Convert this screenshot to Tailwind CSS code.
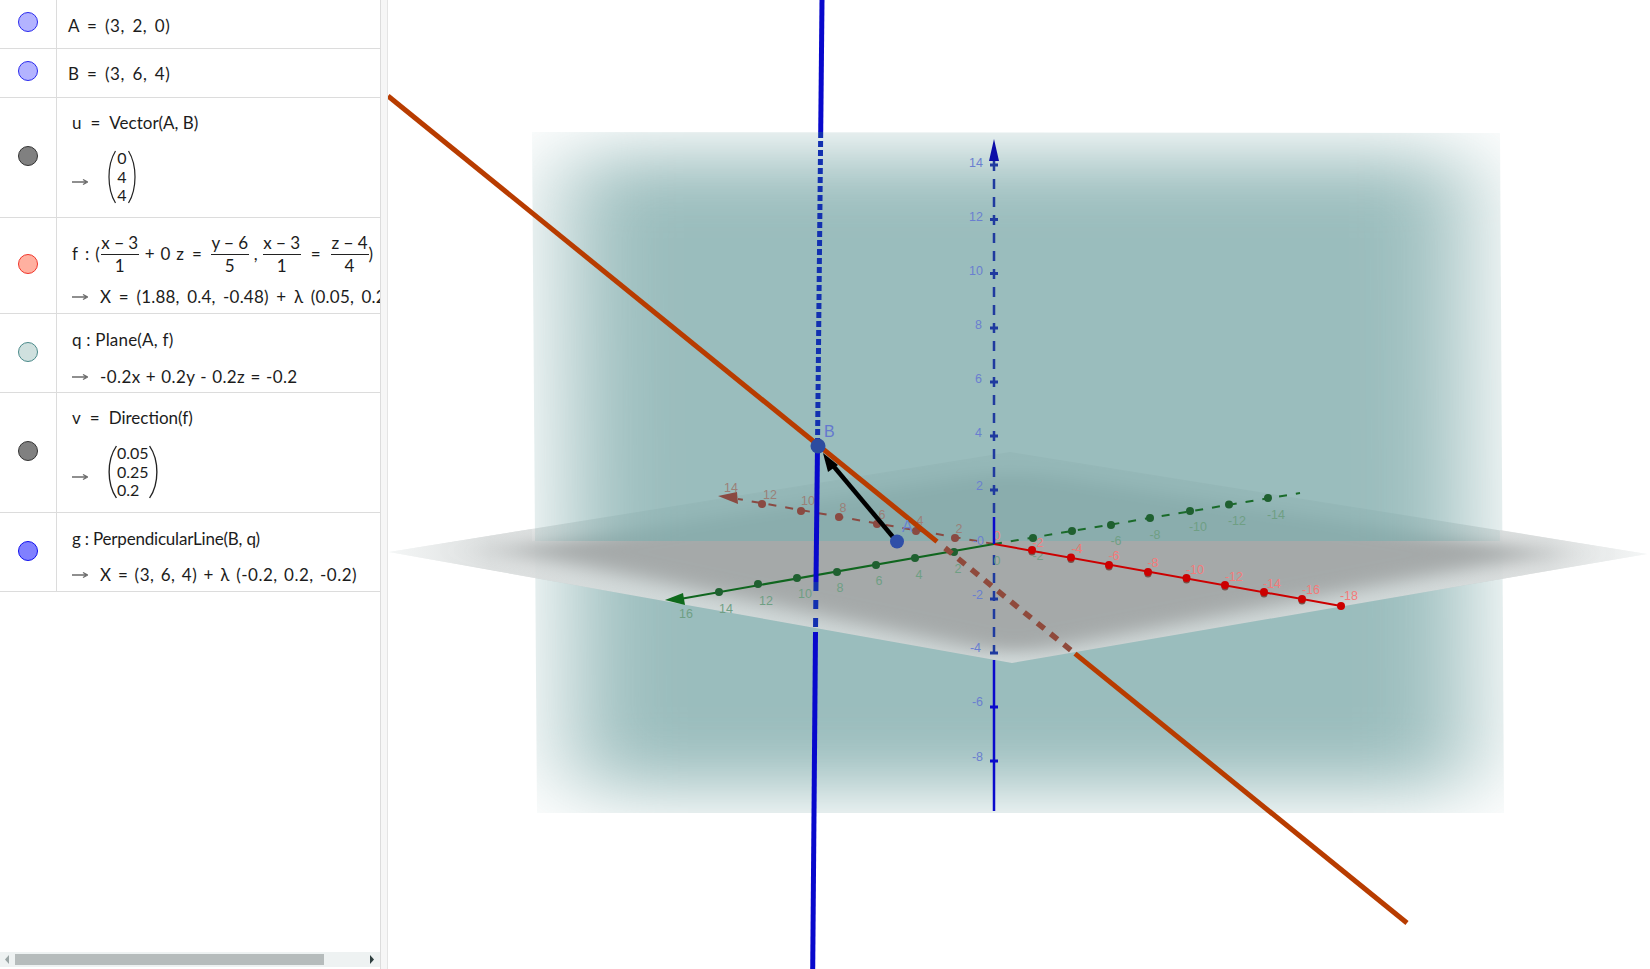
<!DOCTYPE html>
<html lang="en">
<head>
  <meta charset="UTF-8">
  <title>GeoGebra 3D</title>
  <script src="https://cdn.jsdelivr.net/npm/@tailwindcss/browser@4"></script>
</head>
<body class="bg-white overflow-hidden">
<div class="flex w-[1650px] h-[969px] font-['Lato','Open_Sans',sans-serif] text-[#1c1c1c]">

  <!-- algebra view -->
  <aside class="w-[381px] h-full flex flex-col border-r border-[#dcdcdc] overflow-hidden text-[17px]">
    <!-- A -->
    <div class="flex h-[49px] shrink-0 border-b border-[#dcdcdc]">
      <div class="w-[57px] shrink-0 border-r border-[#dcdcdc] flex items-center justify-center pb-[4px]">
        <div class="w-5 h-5 rounded-full bg-[#b3b3ff] border border-[#2a2aee]"></div>
      </div>
      <div class="pl-[11px] pt-[14px] leading-[24px] whitespace-nowrap tracking-[0.6px] [word-spacing:2.5px]">A = (3, 2, 0)</div>
    </div>
    <!-- B -->
    <div class="flex h-[49px] shrink-0 border-b border-[#dcdcdc]">
      <div class="w-[57px] shrink-0 border-r border-[#dcdcdc] flex items-center justify-center pb-[4px]">
        <div class="w-5 h-5 rounded-full bg-[#b3b3ff] border border-[#2a2aee]"></div>
      </div>
      <div class="pl-[11px] pt-[13px] leading-[24px] whitespace-nowrap tracking-[0.6px] [word-spacing:2.5px]">B = (3, 6, 4)</div>
    </div>
    <!-- u -->
    <div class="flex h-[120px] shrink-0 border-b border-[#dcdcdc]">
      <div class="w-[57px] shrink-0 border-r border-[#dcdcdc] flex items-center justify-center pb-[3px]">
        <div class="w-5 h-5 rounded-full bg-[#808080] border border-[#333333]"></div>
      </div>
      <div class="pl-[15px] pt-[13px] min-w-0 flex flex-col">
        <div class="leading-[24px] whitespace-nowrap"><span class="mr-[9px]">u</span><span class="mr-[9px]">=</span>Vector(A, B)</div>
        <div class="flex items-center mt-[13px] h-[58px]">
          <svg class="w-4 h-2 mr-[20px] mt-[10px]" viewBox="0 0 16 8"><path d="M0 4h14M11 1.5 15.5 4 11 6.5" fill="none" stroke="#6b6b6b" stroke-width="1.4"/></svg>
          <div class="flex items-stretch h-[54px]">
            <svg class="w-[8px] h-full" viewBox="0 0 8 54" preserveAspectRatio="none"><path d="M7.5 1C2 10 1 18 1 27s1 17 6.500 26" fill="none" stroke="#222" stroke-width="1.2"/></svg>
            <div class="flex flex-col items-center justify-center w-[12px] text-[16px] leading-[18.5px]"><span>0</span><span>4</span><span>4</span></div>
            <svg class="w-[8px] h-full" viewBox="0 0 8 54" preserveAspectRatio="none"><path d="M.5 1C6 10 7 18 7 27S6 44 .5 53" fill="none" stroke="#222" stroke-width="1.2"/></svg>
          </div>
        </div>
      </div>
    </div>
    <!-- f -->
    <div class="flex h-[96px] shrink-0 border-b border-[#dcdcdc]">
      <div class="w-[57px] shrink-0 border-r border-[#dcdcdc] flex items-center justify-center pb-[3px]">
        <div class="w-5 h-5 rounded-full bg-[#ffb0a0] border border-[#f0352a]"></div>
      </div>
      <div class="pl-[15px] pt-[14px] min-w-0 flex-1 flex flex-col overflow-hidden">
        <div class="flex items-center h-[44px] whitespace-nowrap">
          <span class="mr-[7px]">f</span><span class="mr-[6px]">:</span><span class="mr-[1px]">(</span>
          <div class="flex flex-col items-center w-[38px] shrink-0 text-[17px] leading-[22px]"><span class="w-full text-center border-b border-[#222]">x − 3</span><span>1</span></div>
          <span class="ml-[6px] mr-[8px] [word-spacing:1.5px]">+ 0 z</span><span class="mr-[9px]">=</span>
          <div class="flex flex-col items-center w-[38px] shrink-0 text-[17px] leading-[22px]"><span class="w-full text-center border-b border-[#222]">y − 6</span><span>5</span></div>
          <span class="mx-[5px]">,</span>
          <div class="flex flex-col items-center w-[38px] shrink-0 text-[17px] leading-[22px]"><span class="w-full text-center border-b border-[#222]">x − 3</span><span>1</span></div>
          <span class="mx-[10px]">=</span>
          <div class="flex flex-col items-center w-[38px] shrink-0 text-[17px] leading-[22px]"><span class="w-full text-center border-b border-[#222]">z − 4</span><span>4</span></div>
          <span>)</span>
        </div>
        <div class="flex items-center h-[24px] mt-[9px] whitespace-nowrap tracking-[0.2px] [word-spacing:3px]">
          <svg class="w-4 h-2 mr-[12px] shrink-0" viewBox="0 0 16 8"><path d="M0 4h14M11 1.5 15.5 4 11 6.5" fill="none" stroke="#6b6b6b" stroke-width="1.4"/></svg>
          <span>X = (1.88, 0.4, -0.48) + λ (0.05, 0.25, 0.2)</span>
        </div>
      </div>
    </div>
    <!-- q -->
    <div class="flex h-[79px] shrink-0 border-b border-[#dcdcdc]">
      <div class="w-[57px] shrink-0 border-r border-[#dcdcdc] flex items-center justify-center pb-[3px]">
        <div class="w-5 h-5 rounded-full bg-[#cfe0de] border border-[#4a8a8a]"></div>
      </div>
      <div class="pl-[15px] pt-[14px] min-w-0 flex flex-col">
        <div class="leading-[24px] whitespace-nowrap tracking-[0.2px]">q : Plane(A, f)</div>
        <div class="flex items-center h-[24px] mt-[13px] whitespace-nowrap tracking-[0.4px] [word-spacing:0.5px]">
          <svg class="w-4 h-2 mr-[12px] shrink-0" viewBox="0 0 16 8"><path d="M0 4h14M11 1.5 15.5 4 11 6.5" fill="none" stroke="#6b6b6b" stroke-width="1.4"/></svg>
          <span>-0.2x + 0.2y - 0.2z = -0.2</span>
        </div>
      </div>
    </div>
    <!-- v -->
    <div class="flex h-[120px] shrink-0 border-b border-[#dcdcdc]">
      <div class="w-[57px] shrink-0 border-r border-[#dcdcdc] flex items-center justify-center pb-[3px]">
        <div class="w-5 h-5 rounded-full bg-[#808080] border border-[#333333]"></div>
      </div>
      <div class="pl-[15px] pt-[13px] min-w-0 flex flex-col">
        <div class="leading-[24px] whitespace-nowrap"><span class="mr-[9px]">v</span><span class="mr-[9px]">=</span>Direction(f)</div>
        <div class="flex items-center mt-[13px] h-[58px]">
          <svg class="w-4 h-2 mr-[20px] mt-[10px]" viewBox="0 0 16 8"><path d="M0 4h14M11 1.5 15.5 4 11 6.5" fill="none" stroke="#6b6b6b" stroke-width="1.4"/></svg>
          <div class="flex items-stretch h-[54px]">
            <svg class="w-[9px] h-full" viewBox="0 0 8 54" preserveAspectRatio="none"><path d="M7.5 1C2 10 1 18 1 27s1 17 6.500 26" fill="none" stroke="#222" stroke-width="1.2"/></svg>
            <div class="flex flex-col items-start justify-center w-[32px] text-[16px] leading-[18.5px]"><span>0.05</span><span>0.25</span><span>0.2</span></div>
            <svg class="w-[9px] h-full" viewBox="0 0 8 54" preserveAspectRatio="none"><path d="M.5 1C6 10 7 18 7 27S6 44 .5 53" fill="none" stroke="#222" stroke-width="1.2"/></svg>
          </div>
        </div>
      </div>
    </div>
    <!-- g -->
    <div class="flex h-[79px] shrink-0 border-b border-[#dcdcdc]">
      <div class="w-[57px] shrink-0 border-r border-[#dcdcdc] flex items-center justify-center pb-[3px]">
        <div class="w-5 h-5 rounded-full bg-[#8080ff] border border-[#1010ee]"></div>
      </div>
      <div class="pl-[15px] pt-[14px] min-w-0 flex flex-col">
        <div class="leading-[24px] whitespace-nowrap tracking-[-0.2px]">g : PerpendicularLine(B, q)</div>
        <div class="flex items-center h-[24px] mt-[12px] whitespace-nowrap tracking-[0.5px] [word-spacing:1.5px]">
          <svg class="w-4 h-2 mr-[12px] shrink-0" viewBox="0 0 16 8"><path d="M0 4h14M11 1.5 15.5 4 11 6.5" fill="none" stroke="#6b6b6b" stroke-width="1.4"/></svg>
          <span>X = (3, 6, 4) + λ (-0.2, 0.2, -0.2)</span>
        </div>
      </div>
    </div>

    <div class="flex-1"></div>

    <!-- horizontal scrollbar -->
    <div class="h-[15px] mb-[2px] shrink-0 bg-[#eef2f2] flex items-center">
      <svg class="w-[15px] h-[11px] shrink-0" viewBox="0 0 15 11"><path d="M9 1v9L5 5.500z" fill="#9aa5a5"/></svg>
      <div class="w-[309px] h-[11px] bg-[#b6bcbc]"></div>
      <div class="flex-1"></div>
      <svg class="w-[9px] h-[11px] shrink-0 mr-[2px]" viewBox="0 0 9 11"><path d="M1 1v9l4-4.500z" fill="#2f3f3f"/></svg>
    </div>
  </aside>

  <!-- splitter -->
  <div class="w-[7px] h-full shrink-0 bg-[#f6f6f6] border-r border-[#e4e4e4]"></div>

  <!-- 3D graphics view -->
  <main class="flex-1 h-full relative overflow-hidden bg-white">
    <svg class="absolute inset-0 w-[1262px] h-[969px]" viewBox="388 0 1262 969" font-family="Liberation Sans, sans-serif" font-size="12.500">
      <defs>
        <clipPath id="planeClip"><polygon points="532,132 1500,133 1504,813 537,813"/></clipPath>
        <clipPath id="groundClip"><polygon points="389,552 1010,452 1647,554 1012,663"/></clipPath>
        <clipPath id="frontClip"><polygon points="389,552 532,529 532,541 1500,541 1500,530 1647,554 1012,663"/></clipPath>
        <linearGradient id="tipFade" gradientUnits="userSpaceOnUse" x1="389" y1="0" x2="1647" y2="0">
          <stop offset="0" stop-color="#f4f6f6"/><stop offset="0.08" stop-color="#dcdfdf"/><stop offset="0.92" stop-color="#dcdfdf"/><stop offset="1" stop-color="#f4f6f6"/>
        </linearGradient>
        <filter id="planeBlur" filterUnits="userSpaceOnUse" x="388" y="0" width="1262" height="969"><feGaussianBlur stdDeviation="50 35"/></filter>
        <filter id="groundBlur" filterUnits="userSpaceOnUse" x="388" y="300" width="1262" height="500"><feGaussianBlur stdDeviation="35 7"/></filter>
      </defs>

      <!-- xOy plane, behind -->
      <polygon points="389,552 1010,452 1647,554 1012,663" fill="url(#tipFade)" fill-opacity="0.85"/>
      <g clip-path="url(#groundClip)"><polygon points="510,550 1010,470 1545,553 1012,656" fill="#a2a6a6" fill-opacity="0.95" filter="url(#groundBlur)"/></g>
      <!-- plane q -->
      <g clip-path="url(#planeClip)"><polygon points="565,155 1467,155 1471,790 570,790" fill="#83aeae" fill-opacity="0.81" filter="url(#planeBlur)"/></g>
      <!-- xOy plane, in front -->
      <polygon points="389,552 532,529 532,541 1500,541 1500,530 1647,554 1012,663" fill="url(#tipFade)" fill-opacity="0.85"/>
      <g clip-path="url(#frontClip)"><polygon points="510,550 1010,470 1545,553 1012,656" fill="#a2a6a6" fill-opacity="0.95" filter="url(#groundBlur)"/></g>

      <!-- x axis, positive side -->
      <line x1="994" y1="544" x2="738" y2="499" stroke="#8a4a42" stroke-width="2" stroke-dasharray="8 9"/>
      <polygon points="718,496 737,492 738,504" fill="#8a4a42"/>
      <g fill="#8a4a42">
        <circle cx="762" cy="504" r="4"/><circle cx="801" cy="511" r="4"/><circle cx="839" cy="517" r="4"/><circle cx="877" cy="524" r="4"/><circle cx="916" cy="531" r="4"/><circle cx="955" cy="538" r="4"/>
      </g>
      <g fill="#9a8078" text-anchor="middle">
        <text x="731" y="492">14</text><text x="770" y="499">12</text><text x="808" y="505">10</text><text x="843" y="512">8</text><text x="882" y="519">6</text><text x="920" y="525">4</text><text x="959" y="533">2</text>
      </g>

      <!-- y axis, negative side -->
      <line x1="994" y1="544" x2="1300" y2="493" stroke="#1a6b2a" stroke-width="2" stroke-dasharray="8 9"/>
      <g fill="#1f6030">
        <circle cx="1033" cy="538" r="4"/><circle cx="1072" cy="531" r="4"/><circle cx="1111" cy="525" r="4"/><circle cx="1150" cy="518" r="4"/><circle cx="1190" cy="511" r="4"/><circle cx="1229" cy="504.500" r="4"/><circle cx="1268" cy="498" r="4"/>
      </g>
      <g fill="#6f9f84" text-anchor="middle">
        <text x="1038" y="560">-2</text><text x="1077" y="553">-4</text><text x="1116" y="545">-6</text><text x="1155" y="539">-8</text><text x="1198" y="531">-10</text><text x="1237" y="525">-12</text><text x="1276" y="519">-14</text>
      </g>

      <!-- y axis, positive side -->
      <line x1="994" y1="544" x2="680" y2="599" stroke="#10661f" stroke-width="2"/>
      <polygon points="665,600 683,593 685,605" fill="#0e6a1c"/>
      <g fill="#1f6030">
        <circle cx="954" cy="552" r="4"/><circle cx="915" cy="558" r="4"/><circle cx="876" cy="565" r="4"/><circle cx="837" cy="572" r="4"/><circle cx="797" cy="578" r="4"/><circle cx="758" cy="584" r="4"/><circle cx="719" cy="592" r="4"/>
      </g>
      <g fill="#6f9f84" text-anchor="middle">
        <text x="958" y="573">2</text><text x="919" y="579">4</text><text x="879" y="585">6</text><text x="840" y="592">8</text><text x="805" y="598">10</text><text x="766" y="605">12</text><text x="726" y="613">14</text><text x="686" y="618">16</text>
      </g>

      <!-- x axis, negative side -->
      <line x1="994" y1="544" x2="1341" y2="606" stroke="#cc0000" stroke-width="2"/>
      <g fill="#7a5048">
        <circle cx="1032" cy="552" r="3.500"/><circle cx="1071" cy="559.500" r="3.500"/><circle cx="1109" cy="567" r="3.500"/><circle cx="1148" cy="574" r="3.500"/><circle cx="1186.500" cy="580" r="3.500"/><circle cx="1225" cy="587" r="3.500"/><circle cx="1264" cy="594" r="3.500"/><circle cx="1302" cy="601" r="3.500"/>
      </g>
      <g fill="#cc0000">
        <circle cx="1032" cy="550" r="4"/><circle cx="1071" cy="557.500" r="4"/><circle cx="1109" cy="565" r="4"/><circle cx="1148" cy="572" r="4"/><circle cx="1186.500" cy="578" r="4"/><circle cx="1225" cy="585" r="4"/><circle cx="1264" cy="592" r="4"/><circle cx="1302" cy="599" r="4"/><circle cx="1341" cy="606" r="4"/>
      </g>
      <g fill="#f47a7a" text-anchor="middle">
        <text x="1038" y="547">-2</text><text x="1077" y="553">-4</text><text x="1114" y="560">-6</text><text x="1153" y="567">-8</text><text x="1195" y="574">-10</text><text x="1234" y="581">-12</text><text x="1272" y="588">-14</text><text x="1311" y="594">-16</text><text x="1349" y="600">-18</text>
        <text x="997" y="540">0</text>
      </g>

      <!-- z axis -->
      <line x1="994" y1="161" x2="994" y2="517" stroke="#1f3a9f" stroke-width="2.500" stroke-dasharray="10 8"/>
      <line x1="994" y1="517" x2="994" y2="544" stroke="#0a0acc" stroke-width="2.500"/>
      <line x1="994" y1="555" x2="994" y2="653" stroke="#1f3a9f" stroke-width="2.500" stroke-dasharray="10 8"/>
      <line x1="994" y1="660" x2="994" y2="811" stroke="#0a0acc" stroke-width="2.500"/>
      <polygon points="994,139 999,161 989,161" fill="#0c0ca8"/>
      <path d="M990 165h8M990 219.500h8M990 273.500h8M990 328h8M990 382h8M990 436h8M990 490h8M990 599h8M990 653h8" stroke="#1f3a9f" stroke-width="3"/>
      <path d="M990 707h8M990 761h8" stroke="#0a0acc" stroke-width="3"/>
      <g fill="#6a7fd0" text-anchor="end">
        <text x="983" y="167">14</text><text x="983" y="221">12</text><text x="983" y="275">10</text><text x="982" y="329">8</text><text x="982" y="383">6</text><text x="982" y="437">4</text><text x="983" y="490">2</text><text x="983" y="599">-2</text><text x="981" y="652">-4</text><text x="983" y="706">-6</text><text x="983" y="761">-8</text><text x="984" y="545">-0</text>
      </g>
      <text x="997" y="565" fill="#6f9f84" text-anchor="middle">0</text>

      <!-- line g -->
      <g stroke="#0808cc" stroke-width="5" fill="none">
        <line x1="822" y1="0" x2="820.700" y2="132"/>
        <line x1="820.700" y1="132" x2="817.500" y2="446" stroke="#1230b0" stroke-dasharray="6 3"/>
        <line x1="817.500" y1="446" x2="816" y2="582"/>
        <line x1="816" y1="582" x2="815.500" y2="632" stroke="#1230b0" stroke-dasharray="9 9"/>
        <line x1="815.500" y1="632" x2="812.700" y2="969"/>
      </g>

      <!-- line f -->
      <line x1="388" y1="96" x2="937" y2="541.600" stroke="#b83c00" stroke-width="5"/>
      <line x1="945" y1="548" x2="1075" y2="653.600" stroke="#8f4a3c" stroke-width="5.500" stroke-dasharray="9 8"/>
      <line x1="1075" y1="653.600" x2="1407" y2="923" stroke="#b83c00" stroke-width="5"/>

      <!-- vector u -->
      <line x1="893" y1="537" x2="830" y2="462" stroke="#000000" stroke-width="4.500"/>
      <polygon points="823,453 838,465 828,472" fill="#000000"/>

      <!-- points -->
      <circle cx="897" cy="541.500" r="7" fill="#2f4fa8"/>
      <circle cx="818" cy="446" r="7.500" fill="#2d4c9f"/>
      <text x="902" y="532" fill="#6a84cf" font-size="16">A</text>
      <text x="824" y="437" fill="#6478cf" font-size="16">B</text>
    </svg>
  </main>
</div>
</body>
</html>
